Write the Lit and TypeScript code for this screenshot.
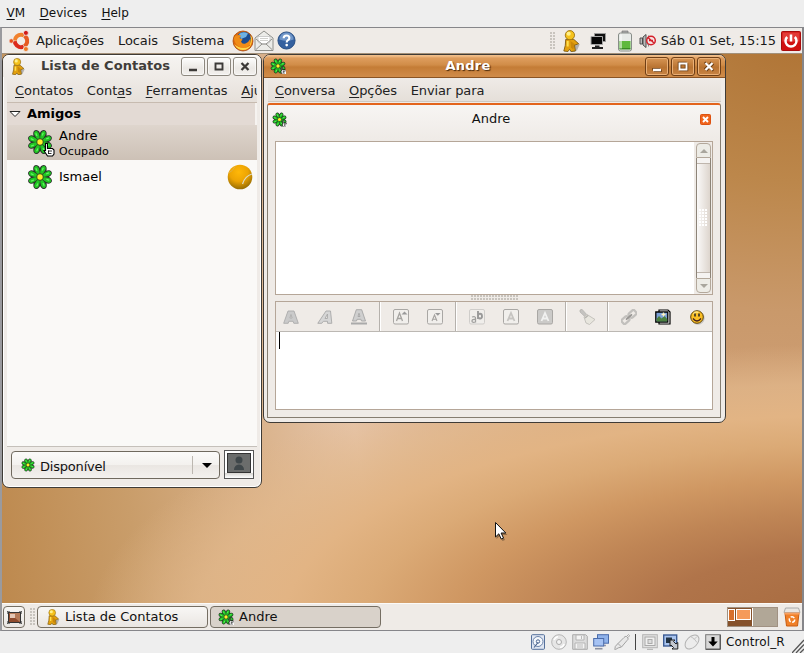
import { LitElement, html, css, svg } from "lit";
import { customElement, property } from "lit/decorators.js";

const petals = [22, 67, 112, 157, 202, 247, 292, 337];
const flower = (hand = false) => html`<svg viewBox="0 0 26 26" width="100%" height="100%">
  <circle cx="13" cy="13" r="9" fill="#2b382b"/>
  ${petals.map((a) => svg`<ellipse cx="13" cy="5" rx="3.500" ry="4.700" fill="#2c362c" transform="rotate(${a} 13 13)"/>`)}
  ${petals.map((a) => svg`<path d="M13 10.500C11.400 8.500 9.900 1.700 13 1.700S14.600 8.500 13 10.500z" fill="#20c823" stroke="#20c823" stroke-width=".9" transform="rotate(${a} 13 13)"/>
    <path d="M12.600 3.200v3" stroke="#62f262" stroke-width="1.300" transform="rotate(${a} 13 13)"/>`)}
  <circle cx="13" cy="13" r="3.700" fill="#3a5a22"/><circle cx="13" cy="13" r="2.700" fill="#fff02a"/>
  ${hand ? svg`<path d="M18.500 14.500h2v5h5l1.500 1.500v4l-1.500 2h-5l-2-3-1.500-2.500h1.500z" fill="#fff" stroke="#000" stroke-width="1.100"/><path d="M21 22h4M21 24.500h3.500M21.500 21.500v3" stroke="#000" stroke-width=".8" fill="none"/>` : ""}
</svg>`;

const buddy = html`<svg viewBox="0 0 16 20" width="100%" height="100%">
  <path d="M7 19.800l4-6 5-1-2.500 5.500-2 1.500z" fill="#777" opacity=".5"/>
  <path d="M3.200 8.500h7.300l4.500 4-3.800 1.300.8 5.200-3.800.6-1.500-2-1.500 2-3.700-.5 1.300-5.100z" fill="#e3a00e" stroke="#7c5a10" stroke-width=".8"/>
  <path d="M7.500 10l4 3-1.500 5-2-2z" fill="#b97806" opacity=".6"/>
  <circle cx="7" cy="4.700" r="4.200" fill="#f5c21c" stroke="#9a6f10" stroke-width=".8"/>
  <circle cx="5.900" cy="3.400" r="1.900" fill="#fff08a"/><path d="M5 10v5" stroke="#ffe04f" stroke-width="1.800"/>
</svg>`;

const ring = (start: number, color: string) => svg`<circle cx="12" cy="11" r="6.200" fill="none" stroke="${color}" stroke-width="4" stroke-dasharray="12.200 40" transform="rotate(${start} 12 11)"/>`;
const ubuntu = html`<svg viewBox="0 0 22 22" width="22" height="22">
  ${ring(184, "#f1812e")}${ring(304, "#e65a22")}${ring(64, "#dc2a1c")}
  <circle cx="2.300" cy="11" r="2.200" fill="#e8501c" stroke="#efebe7" stroke-width=".6"/><circle cx="16.900" cy="2.900" r="2.500" fill="#d01818" stroke="#efebe7" stroke-width=".8"/><circle cx="16.900" cy="19" r="2.500" fill="#ee7a24" stroke="#efebe7" stroke-width=".8"/>
</svg>`;
const firefox = html`<svg viewBox="0 0 22 22" width="22" height="22">
  <circle cx="11" cy="11" r="10" fill="#e2690c"/><circle cx="12" cy="9" r="7.300" fill="#1c4c90"/><path d="M7 4q4-3 9-.5l-2 3.500-5 2z" fill="#6fb1e2"/>
  <path d="M2 4.500q1 1 2.500 1Q7 4.500 9 5.500L7.500 8l3 1.500-1.500 2q1 3 4.500 2 3-1 5-5 1 7-4.500 9T4 14Q1 9 2 4.500z" fill="#f08c17"/>
  <path d="M2.200 14Q5 20 11 20t8.500-6q-3 4-8 4t-9.300-4z" fill="#ffd84a"/><path d="M19 6q1.500 5-1 9" stroke="#ffc637" stroke-width="1.300" fill="none"/><circle cx="11" cy="11" r="10" fill="none" stroke="#a8480a" stroke-width=".8"/>
</svg>`;
const mail = html`<svg viewBox="0 0 20 22" width="20" height="22"><path d="M1 8l9-7 9 7v12.500H1z" fill="#ecece9" stroke="#8e8e8a"/><path d="M4 6.500h12V12l-3 2H7l-3-2z" fill="#fff" stroke="#bbb" stroke-width=".7"/><path d="M2 9l6 5h4l6-5M2 19.500l6-5.500M18 19.500L12 14" fill="none" stroke="#92928e"/><path d="M6 8.500h8M6 10.500h8" stroke="#c4c4c0" stroke-width=".8"/></svg>`;
const help = html`<svg viewBox="0 0 20 20" width="19" height="19"><circle cx="10" cy="10" r="9" fill="#34609f" stroke="#234a80"/><path d="M2.500 9a7.500 7.500 0 0 1 15 0q-7 3-15 0z" fill="#6f95c8"/><path d="M7 7.700q0-3 3-3t3 2.600q0 1.700-1.700 2.500Q10.200 10.500 10.200 12" fill="none" stroke="#fff" stroke-width="2.200"/><circle cx="10.200" cy="14.800" r="1.400" fill="#fff"/></svg>`;
const net = html`<svg viewBox="0 0 18 18" width="18" height="18"><path d="M5.500 1.500h11v8h-11z" fill="#111" stroke="#9a9a9a"/><path d="M2 4.500h11.500v8H2z" fill="#060606" stroke="#aaa"/><path d="M6 13.500h4.500v1.500H14v2H3v-2h3z" fill="#222"/></svg>`;
const battery = html`<svg viewBox="0 0 16 22" width="16" height="22"><path d="M5 1h6v2.500H5z" fill="#aaa" stroke="#777" stroke-width=".7"/><rect x="1.500" y="3" width="13" height="18" rx="2" fill="#e8ebe8" stroke="#888d88"/><path d="M2.500 11h11v7.500h-11z" fill="#5fb93c"/><path d="M2.500 18h11v1.500h-11z" fill="#3a8a22"/><path d="M4 4.500v14" stroke="#fff" opacity=".7" stroke-width="1.500"/></svg>`;
const muted = html`<svg viewBox="0 0 18 16" width="18" height="16"><path d="M1 5h2.500v6H1zM4 4l3-2.500v13L4 12z" fill="#bbb" stroke="#444" stroke-width=".9"/><path d="M8 4v8M9.500 2.500v11" stroke="#888"/><circle cx="12" cy="7.500" r="4.300" fill="#f5e4e4" stroke="#d4202a" stroke-width="1.500"/><path d="M9 4.500l6 5.500M10 7.500h4" stroke="#d4202a" stroke-width="1.500"/></svg>`;
const power = html`<svg viewBox="0 0 20 20" width="20" height="20"><rect x=".5" y=".5" width="19" height="19" rx="1" fill="#d01010" stroke="#a80c0c"/><rect x="1.500" y="1.500" width="17" height="9" fill="#e23a36"/><path d="M6.200 6a5.500 5.500 0 1 0 7.600 0M10 3.500v7" fill="none" stroke="#fff" stroke-width="2.500"/></svg>`;

const glyph = (kind: string) =>
  kind === "min" ? svg`<path d="M8 13h8" stroke-width="2.400"/>`
  : kind === "max" ? svg`<path d="M8.500 6.500h7v6h-7z" stroke-width="1.900" fill="none"/>`
  : svg`<path d="M8.500 6l7 7M15.500 6l-7 7" stroke-width="2.300"/>`;

@customElement("window-buttons")
class WindowButtons extends LitElement {
  @property({ type: Boolean, reflect: true }) active = false;
  static styles = css`
    :host { display: flex; gap: 2px; }
    .b { box-sizing: border-box; width: 24px; height: 19px; border: 1px solid #8d887f; border-radius: 3px; background: linear-gradient(#fdfdfc, #ebe8e4 60%, #f3f1ee); box-shadow: inset 0 0 0 1px #fff8; }
    svg { display: block; margin: -1px; stroke: #3c3a38; }
    :host([active]) .b { border-color: #6f3f16; background: linear-gradient(#d79655, #b97331 55%, #c88444); box-shadow: inset 0 0 0 1px #eab077; }
    :host([active]) svg { stroke: #fff; }
    .shade { stroke: #6b3c12; opacity: 0; }
    :host([active]) .shade { opacity: 1; }
  `;
  render() {
    return ["min", "max", "close"].map((k) => html`<div class="b"><svg width="24" height="19">
      <g class="shade" transform="translate(.8 .8)">${glyph(k)}</g><g class="shade" transform="translate(-.8 -.8)">${glyph(k)}</g>${glyph(k)}
    </svg></div>`);
  }
}

const tool = (body: unknown) => html`<svg viewBox="0 0 16 16" width="16" height="16">${body}</svg>`;
const box = (fill = "#f1efec", stroke = "#a9a7a4") => svg`<rect x=".5" y=".5" width="15" height="14.500" rx="1.500" fill="${fill}" stroke="${stroke}"/>`;
const tools = [
  [
    tool(svg`<path d="M.7 14.300h4.500l.6-2h4.400l.6 2h4.500L11 2H5zM6.900 9L8 5.500 9.100 9z" fill="#cacaca" stroke="#ababab" stroke-width=".9"/>`),
    tool(svg`<path d="M.8 14.300h4l1.500-2h4.200l.1 2h4.200L13.500 2H9zM8 9.500L10.500 5l-.1 4.500z" fill="#d6d6d6" stroke="#a8a8a8" stroke-width=".9"/>`),
    tool(svg`<path d="M1.500 12h4l.6-1.700h3.800l.6 1.700h4L10.700.7H5.300zM7 7.500l1-3.300 1 3.300z" fill="#cfcfcf" stroke="#a5a5a5" stroke-width=".9"/><path d="M0 14.600h16" stroke="#aaa" stroke-width="2"/>`),
  ],
  [
    tool(svg`${box()}<path d="M3.500 12L6.500 4l3 8M4.500 9.500h4" fill="none" stroke="#a5a3a0" stroke-width="1.300"/><path d="M8.500 5.500h6l-3-3z" fill="#999"/>`),
    tool(svg`${box()}<path d="M5 12L7.500 6l2.500 6M6 10.300h3.200" fill="none" stroke="#a5a3a0" stroke-width="1.100"/><path d="M8 4h5.500l-2.700 2.800z" fill="#999"/>`),
  ],
  [
    tool(svg`${box("#f0eeeb", "#cfcdca")}<path d="M3 8q3.500-1 3.500 1v4.500M6.500 10.500Q3 10 3 12t3.500 1" fill="none" stroke="#a0a09e" stroke-width="1.300"/><path d="M9 2v8M9 7q0-2.200 2-2.200T13 7.200 11 9.500 9 7.500" fill="none" stroke="#999" stroke-width="1.900"/>`),
    tool(svg`${box()}<path d="M4.500 12L8 4l3.500 8M5.700 9.500h4.600" fill="none" stroke="#c6c4c1" stroke-width="1.800"/>`),
    tool(svg`${box("#cbcac8")}<path d="M4.500 12L8 4l3.500 8M5.700 9.500h4.600" fill="none" stroke="#f1f1f0" stroke-width="1.800"/>`),
  ],
  [tool(svg`<path d="M1 1l2-.7 4.500 5-2 2L1 3z" fill="#c5c3c0" stroke="#b3b1ae" stroke-width=".7"/><path d="M5 8l3-2.500 8 5-5.500 5L7 14z" fill="#e8e6de" stroke="#bfbdb8" stroke-width=".9"/><path d="M6 9l3-2.500" stroke="#b5b3ae" stroke-width="1.500"/>`)],
  [
    tool(svg`<g fill="none" stroke="#c2c0bd" stroke-width="2.200" transform="rotate(-42 8 8)"><rect x="-.5" y="5.300" width="7.500" height="5.400" rx="1.500"/><rect x="9" y="5.300" width="7.500" height="5.400" rx="1.500"/><path d="M4 8h8" stroke="#979592" stroke-width="1.800"/></g>`),
    tool(svg`<path d="M4 1h9l2 2v12H4z" fill="#fff" stroke="#000" stroke-width="1.200"/><path d="M.8 3h12v10H.8z" fill="#7ba0d6" stroke="#000" stroke-width="1.300"/><path d="M1.500 10l2.500-3 2.500 2.500L9.500 7l2.700 3v2.400H1.500z" fill="#4c8040"/><path d="M8.500 3.500v4M6.500 5.500h4" stroke="#fff4c0" stroke-width="1.300"/>`),
    tool(svg`<circle cx="9" cy="9.200" r="6.600" fill="#888" opacity=".4"/><circle cx="8" cy="8" r="6.300" fill="#fbbf24" stroke="#5e4307"/><path d="M4.500 5q2-3 5-1.500" stroke="#ffe680" stroke-width="1.500" fill="none"/><path d="M6 4.500v3M10 4.500v3" stroke="#222" stroke-width="1.500"/><path d="M4 9.500Q8 14.500 12 9.500" fill="none" stroke="#422" stroke-width="1.300"/>`),
  ],
];

const st = (body: unknown) => html`<svg viewBox="0 0 16 16" width="16" height="16">${body}</svg>`;
const statusIcons = [
  st(svg`<rect x="1.500" y=".7" width="13" height="14.600" rx="1" fill="#dfe6f2" stroke="#56719c"/><circle cx="8" cy="7.500" r="5" fill="#f5f8fc" stroke="#6b83aa"/><circle cx="8" cy="7.500" r="1.700" fill="none" stroke="#4a6490"/><path d="M4 13.500l4-5" stroke="#4a6490" stroke-width="1.200"/>`),
  st(svg`<circle cx="8" cy="8" r="7.300" fill="#e6e6e6" stroke="#b5b5b5"/><circle cx="8" cy="8" r="2.500" fill="#f4f4f4" stroke="#aaa"/><path d="M3 6q1.500-3 4-3.500M9 13.500q3-.5 4.200-3.500" stroke="#fff" stroke-width="1.500" fill="none"/>`),
  st(svg`<path d="M.7.700h13l1.600 1.600v13H.7z" fill="#dcdcdc" stroke="#acacac"/><path d="M4 1h8v5H4zM3 9h10v6H3z" fill="#f4f4f4" stroke="#b4b4b4"/><path d="M9.500 2v3M5 11h6M5 13h6" stroke="#bbb"/>`),
  st(svg`<rect x="4.500" y=".7" width="11" height="8.500" fill="#8fb2ea" stroke="#4a6cab"/><path d="M7 11.500h6" stroke="#99a" stroke-width="1.500"/><rect x=".7" y="4.500" width="10" height="7.500" fill="#a5c2f3" stroke="#4a6cab"/><path d="M2 14.700h7.500" stroke="#8a90a0" stroke-width="1.600"/>`),
  st(svg`<path d="M.8 15.500q-.3-3.500 2.700-5.500L10 3.500q1-1.500 2.500-1l1.500 1.500q.5 1.500-1 2.500L7.500 13q-3.500.5-6 2.500z" fill="#e8e8e8" stroke="#a2a2a2"/><path d="M12.500 2.500l2-2 1.200 1.200-2 2M4 9.500l3.500 3.500" fill="none" stroke="#a8a8a8"/>`),
  st(svg`<rect x=".7" y=".7" width="14.600" height="13" fill="#e0e0e0" stroke="#b4b4b4"/><rect x="3" y="3" width="10" height="8.500" fill="#efefef" stroke="#aaa"/><rect x="6" y="5.500" width="4" height="4" fill="#ddd" stroke="#aaa"/><path d="M5 15.300h6" stroke="#aaa"/>`),
  st(svg`<rect x=".7" y="1" width="13" height="11" fill="#a9c4ee" stroke="#3c5c94" stroke-width="1.400"/><rect x="3" y="3.500" width="6" height="5.500" fill="#234"/><path d="M7 6h5l-1.500 1.500 2.500 2.500L14.800 8.500V15H9l1.500-1.500L8 11 7 12z" fill="#c4c8d0" stroke="#222"/>`),
  st(svg`<ellipse cx="8" cy="8" rx="8.300" ry="5.300" transform="rotate(-45 8 8)" fill="#ececec" stroke="#b0b0b0"/><path d="M6.500 2.500q4 1.500 6.500 6M10 5.500l3-3" stroke="#c2c2c2" fill="none"/>`),
  st(svg`<rect x=".7" y=".7" width="14.600" height="14.600" fill="#d8d8d8" stroke="#777"/><path d="M1 15.200h14.200V1" stroke="#444" fill="none"/><path d="M6.500 3h3v4.500h3.200L8 12.500 3.300 7.500h3.200z" fill="#000"/>`),
];

@customElement("app-root")
class AppRoot extends LitElement {
  static styles = css`
    :host { display: flex; flex-direction: column; width: 804px; height: 653px; overflow: hidden; background: #eee; color: #1a1a1a; font: 13px/16px "DejaVu Sans", sans-serif; white-space: nowrap; }
    * { box-sizing: border-box; }
    u { text-decoration: underline; text-underline-offset: 2px; text-decoration-thickness: 1px; text-decoration-skip-ink: none; }
    svg { display: block; flex: none; }
    .vm { height: 27px; display: flex; gap: 14.500px; padding: 5px 6.500px; font-size: 12px; color: #111; }
    .screen { height: 604px; border: solid #86868a; border-width: 1px 2px 1px 2px; border-left-color: #9a9a9e; display: flex; flex-direction: column; }
    .panel { height: 26px; background: #efebe7; border-bottom: 1px solid #a39079; display: flex; align-items: center; }
    .panel .logo { margin-left: 7px; }
    .panel .m1 { margin-left: 5px; width: 82px; letter-spacing: -.15px; } .panel .m2 { width: 54px; letter-spacing: -.1px; } .panel .m3 { width: 60px; }
    .gap { width: var(--w, 3px); flex: none; }
    .tray { width: 18px; height: 22px; margin: 0 9px 0 7px; }
    .clock { margin: 0 5px 0 4px; letter-spacing: -.06px; }
    .grip { width: 5px; height: 18px; background: radial-gradient(circle at 1px 1px, #c8c4be 0.8px, transparent 1px) 0 0 / 3px 3px; }
    .spacer { flex: 1; }
    .desktop { height: 549px; position: relative; overflow: hidden;
      background:
        radial-gradient(ellipse 720px 264px at 850px 570px, #a66a3e 0, #b0744a 28%, #bf8555 42%, #cf9762 55%, #dbaa76 68%, #e2b484 79%, #e2b88bbb 91%, #e2b88b00 106%),
        radial-gradient(ellipse 560px 370px at 800px -20px, #af7334 0, #bc874b 40%, #c9996b 75%, transparent 110%),
        linear-gradient(82deg, #bd894e 0, #c99d6a 16%, #dab38c 32%, #e6c5aa 43%, #d0a078 70%); }
    .win { position: absolute; top: 0; background: #efebe7; border: 1px solid #3f3b36; border-radius: 7px; overflow: hidden; display: flex; flex-direction: column; }
    .list { left: 0; width: 260px; height: 434px; padding: 0 4px; box-shadow: inset 0 0 0 1px #fff; }
    .chat { left: 261px; width: 463px; height: 369px; }
    .title { height: 24px; display: flex; align-items: center; font-weight: bold; color: #403d3a; }
    .list .title { height: 22px; margin: 0 -4px; padding: 0 4px; background: linear-gradient(#fff 0 1px, #f5f3f0 2px, #efebe7); }
    .list .title .ic { width: 14px; height: 17px; margin-left: 4px; } .list .title span { flex: 1; margin-left: 16px; letter-spacing: .05px; }
    .list .menu { height: 25px; padding: 6px 0 0 8px; gap: 13.700px; overflow: hidden; display: flex; background: linear-gradient(#efebe7, #e6e0da); }
    .menu { color: #222; }
    .people { height: 345px; background: #faf9f7; border: solid #c7bbb0; border-width: 1px 0; border-bottom-color: #c5c0ba; color: #000; }
    .group { height: 22px; background: #e3dad4; display: flex; align-items: center; gap: 6px; padding-left: 2px; font-weight: bold; border-right: 2px solid #f6f3f0; }
    .row { height: 34px; display: flex; align-items: center; padding-left: 20px; }
    .row.sel { height: 35px; background: linear-gradient(#ded5cd, #cdc1b6); }
    .row .ic { width: 26px; height: 26px; margin-right: 6px; }
    .row.sel .ic { margin-bottom: 1px; }
    .row.sel .who { padding-top: 1px; }
    .row .ic svg { overflow: visible; }
    .row small { display: block; font-size: 11px; line-height: 15px; letter-spacing: .12px; }
    .row .ball { margin-left: auto; margin-right: 4px; }
    .foot { display: flex; padding: 4px 0 0 4px; }
    .combo { flex: none; width: 209px; height: 28px; border: 1px solid #6f695e; border-radius: 4px; background: linear-gradient(#fbfaf9, #f3f1ee 50%, #eae6e2 52%, #f3f1ee); display: flex; align-items: center; color: #111; padding-left: 9px; }
    .combo span { padding-top: 3px; letter-spacing: -.2px; }
    .combo .ic { width: 14px; height: 14px; margin-right: 5px; }
    .combo i { margin-left: auto; width: 1px; height: 18px; background: #bcb7b0; margin-right: 9px; }
    .combo svg.ar { margin-right: 7px; }
    .avatar { flex: none; width: 30px; height: 29px; margin: -1px 0 0 4px; border: 1px solid #555; background: linear-gradient(#fff 80%, #d8d6d2 82%, #fff); padding: 2px; }
    .chat .title { height: 23px; background: linear-gradient(#f0bd88 0 1px, #de9d5e 3px, #d18d48 45%, #c47c36 55%, #d08c4a); border-bottom: 1px solid #8a5424; color: #fff; padding: 0 4px 0 6px; }
    .chat .title span { flex: 1; text-align: center; padding-left: 5px; text-shadow: 1px 1px 1px #4a2a0c; letter-spacing: .2px; }
    .chat .title .ic { width: 16px; height: 16px; }
    .chat .menu { height: 24px; margin: 0 4px; padding: 5px 0 0 7px; display: flex; gap: 13.800px; letter-spacing: -.1px; background: linear-gradient(#efebe7, #e5dfd9); border-bottom: 1px solid #cfc8c0; }
    .tab { margin: 1px 4px 4px 3px; flex: 1; border: 1px solid #857d70; border-top: 2px solid #e3641c; border-radius: 3px 3px 0 0; background: linear-gradient(#f7f5f3, #efebe7 34px); padding: 0 7px; display: flex; flex-direction: column; }
    .tabhead { height: 36px; display: flex; align-items: center; padding: 0 2px 8px 0; margin-left: -3px; color: #111; flex: none; }
    .tabhead .ic { width: 15px; height: 15px; } .tabhead span { flex: 1; text-align: center; padding-right: 5px; }
    .view { height: 154px; border: 1px solid #b5a698; background: #fff; display: flex; justify-content: flex-end; flex: none; }
    .bar { width: 18px; background: #efebe7; padding: 1px 1px 1px 2px; display: flex; flex-direction: column; }
    .sb { height: 15px; border: 1px solid #b3a89b; background: #edece6; display: grid; place-items: center; border-radius: 4px 4px 0 0; }
    .sb.dn { border-radius: 0 0 4px 4px; }
    .thumb { flex: 1; border: solid #8d8478; border-width: 0 1px; background: linear-gradient(90deg, #faf9f8, #ddd5cd); display: flex; flex-direction: column; align-items: center; justify-content: space-between; }
    .thumb b { width: 100%; height: 6px; background: #f5f3f1; border-bottom: 1px solid #bfb6ad; } .thumb b + div + b { border: 0; border-top: 1px solid #bfb6ad; }
    .dots { background: radial-gradient(circle at 1px 1px, #fff 1px, transparent 1.1px) 0 0 / 3px 3px; width: 9px; height: 18px; }
    .paned { height: 6px; display: grid; place-items: center; flex: none; }
    .paned div { width: 47px; height: 6px; background: radial-gradient(circle at 1px 1px, #c8c4be .8px, transparent 1px) 0 0 / 3px 3px; }
    .entry { height: 109px; border: 1px solid #b5a698; background: #fff; flex: none; }
    .tools { height: 30px; background: #efebe7; border-bottom: 1px solid #bcb8b3; display: flex; }
    .tg { display: flex; gap: 18px; align-items: center; padding: 0 12px 0 13px; border-right: 1px solid #b5b1ac; box-shadow: 1px 0 #fff; }
    .tg:first-child { padding: 0 12px 0 7px; } .tg:last-child { border: 0; box-shadow: none; padding-right: 0; }
    .caret { width: 1px; height: 17px; background: #000; margin: 0 0 0 3px; }
    .cursor { position: absolute; left: 492px; top: 467px; }
    .panel.bottom { height: 27px; border-bottom: 0; border-top: 1px solid #fbfaf8; padding: 0 1px; }
    .btn { height: 22px; border: 1px solid #756e63; border-radius: 4px; background: linear-gradient(#f8f7f5, #eae6e2); display: flex; align-items: center; color: #111; }
    .show { width: 22px; justify-content: center; margin-right: 5px; }
    .task { width: 171px; margin-left: 2px; padding-left: 8px; }
    .task .ic { width: 14px; height: 16px; margin-right: 5px; } .task.on { background: #d9d2ca; } .task.on .ic { width: 16px; margin-left: -1px; margin-right: 5px; }
    .pager { width: 51px; height: 20px; border: 1px solid #a09182; background: #fff; display: flex; gap: 1px; margin-right: 5px; }
    .ws { flex: 1; background: #b1a797; } .ws.on { background: #86512a; display: flex; gap: 1px; padding: 1px 0 0 0; }
    .ws.on i { width: 7px; height: 12px; background: #d7702c; border: 1px solid #fff; } .ws.on i + i { width: 15px; height: 11px; background: #f59a5a; }
    .status { height: 22px; display: flex; align-items: center; font-size: 12px; color: #111; padding-left: 530px; gap: 5px; }
    .status i { flex: none; width: 1px; height: 16px; background: #444; margin: 0 1px 0 0; }
    .status span { letter-spacing: .12px; }
    .status svg.rz { align-self: flex-end; margin-left: auto; }
  `;
  render() {
    return html`
      <div class="vm"><span><u>V</u>M</span><span><u>D</u>evices</span><span><u>H</u>elp</span></div>
      <div class="screen">
        <div class="panel">
          <div class="logo">${ubuntu}</div><span class="m1">Aplicações</span><span class="m2">Locais</span><span class="m3">Sistema</span>${firefox}${mail}<div class="gap"></div>${help}
          <div class="spacer"></div><div class="grip"></div>
          <div class="tray">${buddy}</div>${net}<div class="gap" style="--w:10px"></div>${battery}<div class="gap" style="--w:6px"></div>${muted}
          <span class="clock">Sáb 01 Set, 15:15</span>${power}<div class="gap" style="--w:1px"></div>
        </div>
        <div class="desktop">
          <div class="win list">
            <div class="title"><div class="ic">${buddy}</div><span>Lista de Contatos</span><window-buttons></window-buttons></div>
            <div class="menu"><span><u>C</u>ontatos</span><span>Cont<u>a</u>s</span><span><u>F</u>erramentas</span><span><u>A</u>ju</span></div>
            <div class="people">
              <div class="group"><svg width="12" height="8"><path d="M1 1.500h10L6 6.500z" fill="#fff" stroke="#222"/></svg>Amigos</div>
              <div class="row sel"><div class="ic">${flower(true)}</div><div class="who">Andre<small>Ocupado</small></div></div>
              <div class="row"><div class="ic">${flower()}</div><div>Ismael</div>
                <svg class="ball" width="26" height="26"><defs><radialGradient id="tb" cx=".45" cy=".3" r=".75"><stop offset="0" stop-color="#ffb808"/><stop offset=".5" stop-color="#eda403"/><stop offset="1" stop-color="#8a6504"/></radialGradient></defs><circle cx="13" cy="13" r="12.300" fill="url(#tb)"/><path d="M25 10Q18 12 15.500 20" fill="none" stroke="#dcd9c4" stroke-width="1.300"/><path d="M1.500 9q4-1.500 6.500-6.500" fill="none" stroke="#dcb458" stroke-width=".8"/></svg></div>
            </div>
            <div class="foot">
              <div class="combo"><div class="ic">${flower()}</div><span>Disponível</span><i></i><svg class="ar" width="10" height="5"><path d="M0 0h10L5 5z"/></svg></div>
              <div class="avatar"><svg width="24" height="20"><rect x=".5" y=".5" width="23" height="19" fill="#6b6d6c" stroke="#333"/><circle cx="12" cy="7" r="3.500" fill="#3f474a"/><path d="M7 17q0-5 5-5.500 5 .5 5 5.500z" fill="#3f474a"/></svg></div>
            </div>
          </div>
          <div class="win chat">
            <div class="title"><div class="ic">${flower(true)}</div><span>Andre</span><window-buttons active></window-buttons></div>
            <div class="menu"><span><u>C</u>onversa</span><span><u>O</u>pções</span><span>Enviar para</span></div>
            <div class="tab">
              <div class="tabhead"><div class="ic">${flower(true)}</div><span>Andre</span><svg width="11" height="11"><rect x=".5" y=".5" width="10" height="10" rx="1" fill="#f0641c" stroke="#dd5210"/><path d="M3 3l5 5M8 3L3 8" stroke="#fff" stroke-width="1.900"/></svg></div>
              <div class="view"><div class="bar">
                <div class="sb"><svg width="8" height="4"><path d="M4 0l4 4H0z" fill="#a9a69d"/></svg></div>
                <div class="thumb"><b></b><div class="dots"></div><b></b></div>
                <div class="sb dn"><svg width="8" height="4"><path d="M0 0h8L4 4z" fill="#a9a69d"/></svg></div>
              </div></div>
              <div class="paned"><div></div></div>
              <div class="entry"><div class="tools">${tools.map((g) => html`<div class="tg">${g}</div>`)}</div><div class="caret"></div></div>
            </div>
          </div>
          <svg class="cursor" width="14" height="21"><path d="M2.500 3v15l3.500-3 2.500 5 2.500-1-2.500-5h5z" fill="#000" opacity=".3"/><path d="M1.500 1.500v14.500l3.300-3.200 2.400 5.200 2.300-1-2.400-5h4.700z" fill="#fff" stroke="#111"/></svg>
        </div>
        <div class="panel bottom">
          <div class="btn show"><svg width="15" height="13"><rect x="1.500" y="1.500" width="12" height="10" fill="#8e4a2c" stroke="#333"/><path d="M2 2h11v9z" fill="#b57a58"/><path d="M3 3h5v4H3z" fill="#e5c7b5"/><path d="M0 3V0h3M12 0h3v3M15 10v3h-3M3 13H0v-3" fill="none" stroke="#222"/></svg></div>
          <div class="grip"></div>
          <div class="btn task"><div class="ic">${buddy}</div>Lista de Contatos</div>
          <div class="btn task on"><div class="ic">${flower(true)}</div>Andre</div>
          <div class="spacer"></div>
          <div class="pager"><div class="ws on"><i></i><i></i></div><div class="ws"></div></div>
          <svg width="18" height="20"><path d="M2 6h14l-1.500 13h-11z" fill="#f08028" stroke="#c95c10"/><path d="M1 5.500L2.500 1h13L17 5.500z" fill="#e9e6e2" stroke="#aaa"/><path d="M1.500 6.500h15" stroke="#f8a060" stroke-width="2"/><circle cx="9" cy="12.500" r="2.700" fill="none" stroke="#fff" stroke-width="1.500" stroke-dasharray="4 1.500"/></svg>
        </div>
      </div>
      <div class="status">${statusIcons.slice(0, 5)}<i></i>${statusIcons.slice(5)}<span>Control_R</span><svg class="rz" width="12" height="14"><path d="M0 14L12 1M4 14l8-8.500M8 14l4-4" stroke="#555" stroke-width="1.300"/></svg></div>
    `;
  }
}
